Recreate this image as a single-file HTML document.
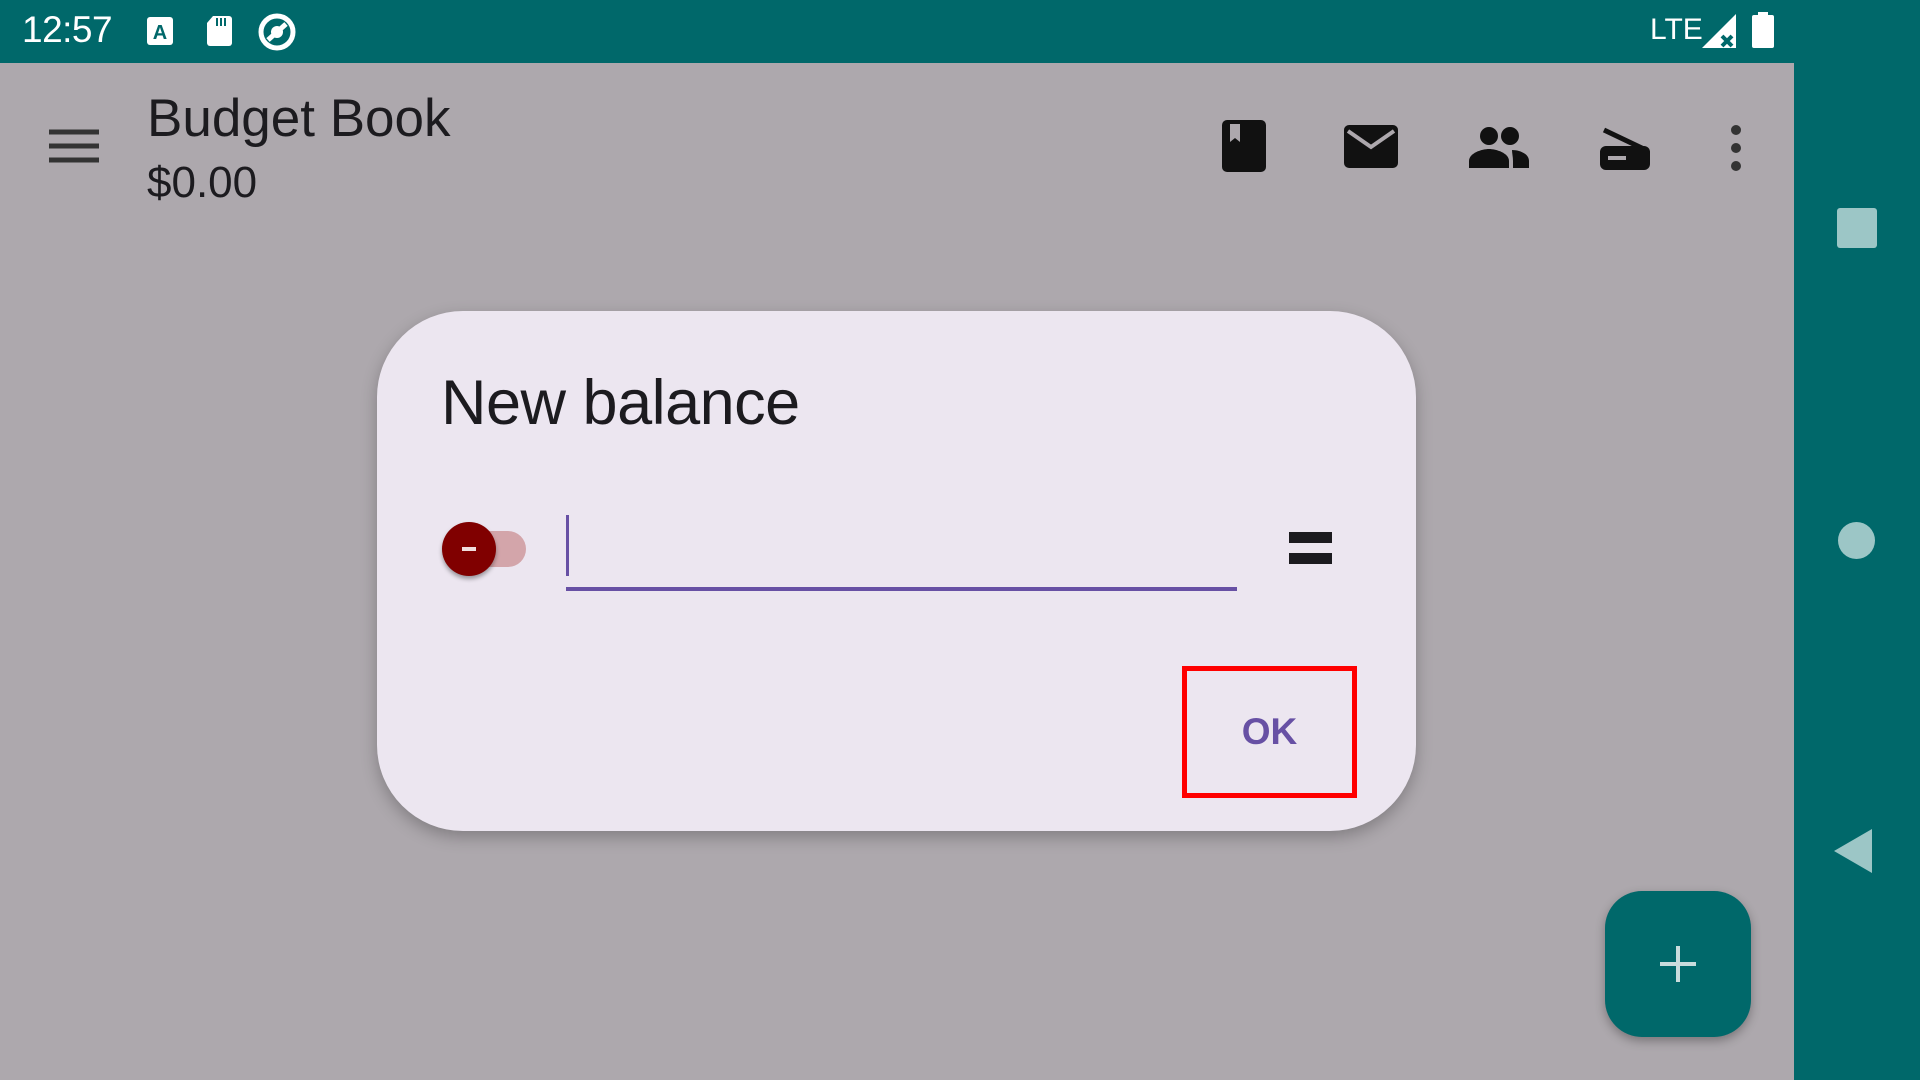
<!DOCTYPE html>
<html><head><meta charset="utf-8"><style>
*{margin:0;padding:0;box-sizing:border-box}
body{width:1920px;height:1080px;overflow:hidden;background:#ada8ad;font-family:"Liberation Sans",sans-serif;position:relative}
.abs{position:absolute}
</style></head><body>
<div class="abs" style="left:0;top:0;width:1920px;height:63px;background:#00686a"></div>
<div class="abs" style="left:1794px;top:63px;width:126px;height:1017px;background:#00686a"></div>
<div class="abs" style="left:22px;top:9px;color:#fff;font-size:37px;letter-spacing:-0.5px">12:57</div>
<svg class="abs" style="left:146px;top:14px" width="30" height="34" viewBox="0 0 30 34"><rect x="1" y="3" width="26" height="28" rx="3" fill="#fff"/><text x="14" y="25" font-size="20" font-weight="bold" text-anchor="middle" fill="#00686a" font-family="Liberation Sans">A</text></svg>
<svg class="abs" style="left:205px;top:14px" width="30" height="34" viewBox="0 0 30 34"><path d="M8 2h16a3 3 0 0 1 3 3v24a3 3 0 0 1-3 3H5a3 3 0 0 1-3-3V9z" fill="#fff"/><path d="M12 4v8M16 4v8M20 4v8" stroke="#00686a" stroke-width="2"/></svg>
<svg class="abs" style="left:256px;top:12px" width="42" height="40" viewBox="0 0 42 40"><circle cx="21" cy="20" r="16" fill="none" stroke="#fff" stroke-width="5"/><path d="M12 28L30 12" stroke="#fff" stroke-width="5"/><circle cx="21" cy="20" r="6" fill="#fff"/></svg>
<div class="abs" style="left:1650px;top:13px;color:#fff;font-size:30px">LTE</div>
<svg class="abs" style="left:1700px;top:14px" width="38" height="36" viewBox="0 0 38 36"><path d="M36 0V34H2z" fill="#fff"/><path d="M22 22l10 10M32 22l-10 10" stroke="#00686a" stroke-width="4"/></svg>
<svg class="abs" style="left:1751px;top:12px" width="24" height="36" viewBox="0 0 24 36"><rect x="7" y="0" width="10" height="4" fill="#fff"/><rect x="1" y="3" width="22" height="33" rx="2" fill="#fff"/></svg>

<svg class="abs" style="left:49px;top:129px" width="50" height="36" viewBox="0 0 50 36"><path d="M0 3h50M0 17h50M0 31h50" stroke="#333" stroke-width="5"/></svg>
<div class="abs" style="left:147px;top:88px;font-size:53px;color:#1c1b1f">Budget Book</div>
<div class="abs" style="left:147px;top:158px;font-size:44px;color:#1c1b1f">$0.00</div>

<svg class="abs" style="left:1222px;top:120px" width="44" height="52" viewBox="0 0 44 52"><rect x="0" y="0" width="44" height="52" rx="5" fill="#111"/><path d="M8 4h10v18l-5-4-5 4z" fill="#ada8ad"/></svg>
<svg class="abs" style="left:1344px;top:125px" width="54" height="43" viewBox="0 0 54 43"><rect x="0" y="0" width="54" height="43" rx="5" fill="#111"/><path d="M4 6l23 16 23-16" fill="none" stroke="#ada8ad" stroke-width="4"/></svg>
<svg class="abs" style="left:1469px;top:126px" width="60" height="42" viewBox="0 0 60 42"><circle cx="20" cy="10" r="9" fill="#111"/><circle cx="41" cy="10" r="9" fill="#111"/><path d="M0 42v-7c0-8 13-12 20-12s20 4 20 12v7z" fill="#111"/><path d="M43 24c8 0 17 4 17 11v7H44v-7c0-4-1-8-1-11z" fill="#111"/></svg>
<svg class="abs" style="left:1600px;top:126px" width="50" height="44" viewBox="0 0 50 44"><path d="M4 4l42 20" stroke="#111" stroke-width="5"/><rect x="0" y="20" width="50" height="24" rx="6" fill="#111"/><rect x="8" y="30" width="18" height="4" fill="#ada8ad"/></svg>
<svg class="abs" style="left:1728px;top:125px" width="16" height="46" viewBox="0 0 16 46"><circle cx="8" cy="5" r="5" fill="#333"/><circle cx="8" cy="23" r="5" fill="#333"/><circle cx="8" cy="41" r="5" fill="#333"/></svg>

<div class="abs" style="left:377px;top:311px;width:1039px;height:520px;background:#ece6f0;border-radius:86px;box-shadow:0 6px 16px rgba(0,0,0,.25)"></div>
<div class="abs" style="left:441px;top:367px;font-size:63px;letter-spacing:-0.5px;color:#1c1b1f">New balance</div>
<div class="abs" style="left:470px;top:531px;width:56px;height:36px;border-radius:18px;background:#d3a5aa"></div>
<div class="abs" style="left:442px;top:522px;width:54px;height:54px;border-radius:50%;background:#800000;box-shadow:0 3px 4px rgba(0,0,0,.35)"></div>
<div class="abs" style="left:462px;top:547px;width:14px;height:4px;background:#f0dede"></div>
<div class="abs" style="left:566px;top:515px;width:3px;height:61px;background:#6750a4"></div>
<div class="abs" style="left:566px;top:587px;width:671px;height:4px;background:#6750a4"></div>
<div class="abs" style="left:1289px;top:532px;width:43px;height:11px;background:#1c1b1f"></div>
<div class="abs" style="left:1289px;top:553px;width:43px;height:11px;background:#1c1b1f"></div>
<div class="abs" style="left:1182px;top:666px;width:175px;height:132px;border:5px solid #ff0000"></div>
<div class="abs" style="left:1182px;top:711px;width:175px;text-align:center;font-size:37px;color:#6750a4;font-weight:600">OK</div>

<div class="abs" style="left:1605px;top:891px;width:146px;height:146px;border-radius:37px;background:#00686a;box-shadow:0 4px 10px rgba(0,0,0,.3)"></div>
<svg class="abs" style="left:1658px;top:944px" width="40" height="40" viewBox="0 0 40 40"><path d="M20 2v36M2 20h36" stroke="#c8dcdc" stroke-width="4"/></svg>

<div class="abs" style="left:1837px;top:208px;width:40px;height:40px;border-radius:3px;background:#9cc6c6"></div>
<div class="abs" style="left:1838px;top:522px;width:37px;height:37px;border-radius:50%;background:#9cc6c6"></div>
<svg class="abs" style="left:1834px;top:829px" width="40" height="44" viewBox="0 0 40 44"><path d="M38 0V44L0 22z" fill="#9cc6c6"/></svg>
</body></html>
